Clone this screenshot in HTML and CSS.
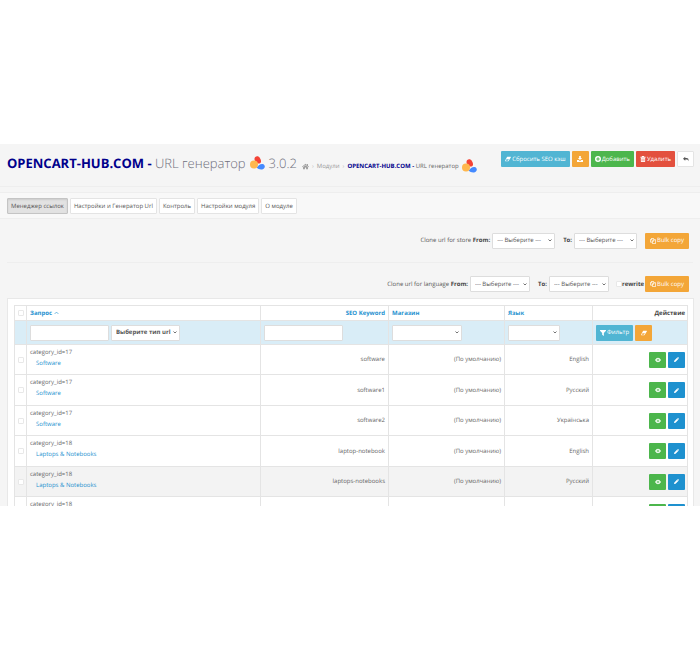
FILE: index.html
```html
<!DOCTYPE html>
<html lang="ru">
<head>
    <meta charset="UTF-8">
    <meta name="viewport" content="width=device-width, initial-scale=1.0">
    <title>URL генератор</title>
    <link rel="stylesheet" href="styles.css">
</head>
<body>
    <!-- Icon set -->
    <svg class="sprite" aria-hidden="true">
        <symbol id="logo" viewBox="0 0 15 14">
            <path fill="#f44336" d="M4.500 3C4.500 0 8.500 -.8 10 2.200C11.500 4.500 11.500 7 9.300 7.500C7 8 4.500 5.500 4.500 3Z"/>
            <path fill="#448aff" d="M6.500 11.500C8.500 9.500 10 7.800 12.500 8C15.500 8.500 15.600 12.300 12.800 13.200C10.500 13.800 8 13 6.500 11.500Z"/>
            <circle fill="#ffb74d" cx="4" cy="8.500" r="4"/>
        </symbol>
        <symbol id="home" viewBox="0 0 16 14">
            <path d="M8 .8L0 7.500L1 8.700L8 3L15 8.700L16 7.500L13.500 5.400V1.500H11.500V3.700Z"/>
            <path d="M8 4L2.500 8.500V13.500H6.500V9.500H9.500V13.500H13.500V8.500Z"/>
        </symbol>
        <symbol id="eraser" viewBox="0 0 16 12">
            <path fill-rule="evenodd" d="M6 0H15Q16.500 .5 15.500 2L9.500 11Q9 12 8 12H1Q-.5 11.500 .4 10L5 1Q5.400 0 6 0ZM4 6.500L1.800 10.500H7.500L10.500 6.500Z"/>
        </symbol>
        <symbol id="download" viewBox="0 0 14 14">
            <path d="M5 0H9V4.500H12L7 9.500L2 4.500H5ZM0 9.500H4L7 12L10 9.500H14V14H0Z"/>
        </symbol>
        <symbol id="plus" viewBox="0 0 14 14">
            <path fill-rule="evenodd" d="M7 0A7 7 0 1 0 7 14A7 7 0 1 0 7 0ZM5.800 3H8.200V5.800H11V8.200H8.200V11H5.800V8.200H3V5.800H5.800Z"/>
        </symbol>
        <symbol id="trash" viewBox="0 0 12 14">
            <path fill-rule="evenodd" d="M4 0H8L9 2H12V4H0V2H3ZM1 4.500H11V13Q11 14 10 14H2Q1 14 1 13ZM3 6V12H4V6ZM5.500 6V12H6.500V6ZM8 6V12H9V6Z"/>
        </symbol>
        <symbol id="reply" viewBox="0 0 16 14">
            <path d="M6 1V4H9C14 4 16 7 14 13C13 9.500 12 8.500 9 8.500H6V11.500L0 6.200Z"/>
        </symbol>
        <symbol id="copy" viewBox="0 0 16 16">
            <path fill="none" stroke="currentColor" stroke-width="2" d="M6 11H1V5L4.500 1H9.500V4M4.500 1V5H1M6.500 15V8L10 4.500H15V15ZM10 4.500V8.500H6.500"/>
        </symbol>
        <symbol id="filter" viewBox="0 0 14 14">
            <path d="M0 0H14V1.500L9 7V14L5 11V7L0 1.500Z"/>
        </symbol>
        <symbol id="eye" viewBox="0 0 16 12">
            <path fill-rule="evenodd" d="M0 6Q8 -6 16 6Q8 18 0 6ZM8 2.500A3.500 3.500 0 1 0 8 9.500A3.500 3.500 0 1 0 8 2.500Z"/>
            <circle cx="8" cy="6" r="2"/>
        </symbol>
        <symbol id="pencil" viewBox="0 0 14 14">
            <path d="M0 14L1 9.500L8.500 2L12 5.500L4.500 13ZM9 1.500L10.500 .4Q11.300 -.2 12 .5L13.500 2Q14.200 2.700 13.600 3.500L12.500 5Z"/>
        </symbol>
    </svg>

    <div class="container">
        <header class="page-header">
            <div class="heading">
                <h1><span><b>OPENCART-HUB.COM -</b> URL генератор</span> <svg class="logo"><use href="#logo"/></svg> 3.0.2</h1>
                <nav class="breadcrumb">
                    <a href="#" aria-label="Главная"><svg class="icon"><use href="#home"/></svg></a>
                    <span class="sep">›</span>
                    <a href="#">Модули</a>
                    <span class="sep">›</span>
                    <a href="#" class="current"><b>OPENCART-HUB.COM -</b> URL генератор</a>
                    <svg class="logo"><use href="#logo"/></svg>
                </nav>
            </div>
            <div class="actions">
                <button type="button" class="btn btn-info"><svg class="icon"><use href="#eraser"/></svg> Сбросить SEO кэш</button>
                <button type="button" class="btn btn-warning" aria-label="Скачать"><svg class="icon"><use href="#download"/></svg></button>
                <button type="button" class="btn btn-success"><svg class="icon"><use href="#plus"/></svg> Добавить</button>
                <button type="button" class="btn btn-danger"><svg class="icon"><use href="#trash"/></svg> Удалить</button>
                <button type="button" class="btn btn-default" aria-label="Назад"><svg class="icon"><use href="#reply"/></svg></button>
            </div>
        </header>

        <nav class="tabs">
            <button type="button" class="btn btn-default active">Менеджер ссылок</button>
            <button type="button" class="btn btn-default">Настройки и Генератор Url</button>
            <button type="button" class="btn btn-default">Контроль</button>
            <button type="button" class="btn btn-default">Настройки модуля</button>
            <button type="button" class="btn btn-default">О модуле</button>
        </nav>

        <form class="clone clone-store">
            <label for="storeFrom">Clone url for store <b>From:</b></label>
            <select id="storeFrom" class="form-control"><option>--- Выберите ---</option></select>
            <label for="storeTo" class="to"><b>To:</b></label>
            <select id="storeTo" class="form-control"><option>--- Выберите ---</option></select>
            <button type="button" class="btn btn-warning bulk"><svg class="icon"><use href="#copy"/></svg>Bulk copy</button>
        </form>

        <form class="clone clone-language">
            <label for="langFrom">Clone url for language <b>From:</b></label>
            <select id="langFrom" class="form-control"><option>--- Выберите ---</option></select>
            <label for="langTo" class="to"><b>To:</b></label>
            <select id="langTo" class="form-control"><option>--- Выберите ---</option></select>
            <label class="rewrite"><input type="checkbox"><b>rewrite</b></label>
            <button type="button" class="btn btn-warning"><svg class="icon"><use href="#copy"/></svg>Bulk copy</button>
        </form>

        <div class="panel">
            <table class="table">
                <colgroup>
                    <col class="col-check">
                    <col class="col-query">
                    <col class="col-keyword">
                    <col class="col-store">
                    <col class="col-lang">
                    <col class="col-action">
                </colgroup>
                <thead>
                    <tr>
                        <th><input type="checkbox" aria-label="Выбрать все"></th>
                        <th><a href="#">Запрос <svg class="caret" viewBox="0 0 8 5"><path d="M1 4L4 1L7 4"/></svg></a></th>
                        <th class="text-right"><a href="#">SEO Keyword</a></th>
                        <th><a href="#">Магазин</a></th>
                        <th><a href="#">Язык</a></th>
                        <th class="text-right">Действие</th>
                    </tr>
                    <tr class="filter">
                        <td></td>
                        <td>
                            <div class="fields">
                                <input type="text" class="form-control" aria-label="Запрос">
                                <select class="form-control type" aria-label="Тип url"><option>Выберите тип url</option></select>
                            </div>
                        </td>
                        <td><input type="text" class="form-control" aria-label="SEO Keyword"></td>
                        <td><select class="form-control store" aria-label="Магазин"><option></option></select></td>
                        <td><select class="form-control lang" aria-label="Язык"><option></option></select></td>
                        <td>
                            <div class="fields">
                                <button type="button" class="btn btn-info"><svg class="icon"><use href="#filter"/></svg> Фильтр</button>
                                <button type="button" class="btn btn-warning" aria-label="Очистить"><svg class="icon"><use href="#eraser"/></svg></button>
                            </div>
                        </td>
                    </tr>
                </thead>
                <tbody>
                    <tr>
                        <td><input type="checkbox" aria-label="Выбрать"></td>
                        <td class="query">category_id=17<a href="#">Software</a></td>
                        <td class="text-right">software</td>
                        <td class="text-right">(По умолчанию)</td>
                        <td class="text-right">English</td>
                        <td>
                            <div class="row-actions">
                                <button type="button" class="btn btn-success" aria-label="Просмотр"><svg class="icon"><use href="#eye"/></svg></button>
                                <button type="button" class="btn btn-primary" aria-label="Изменить"><svg class="icon"><use href="#pencil"/></svg></button>
                            </div>
                        </td>
                    </tr>
                    <tr>
                        <td><input type="checkbox" aria-label="Выбрать"></td>
                        <td class="query">category_id=17<a href="#">Software</a></td>
                        <td class="text-right">software1</td>
                        <td class="text-right">(По умолчанию)</td>
                        <td class="text-right">Русский</td>
                        <td>
                            <div class="row-actions">
                                <button type="button" class="btn btn-success" aria-label="Просмотр"><svg class="icon"><use href="#eye"/></svg></button>
                                <button type="button" class="btn btn-primary" aria-label="Изменить"><svg class="icon"><use href="#pencil"/></svg></button>
                            </div>
                        </td>
                    </tr>
                    <tr>
                        <td><input type="checkbox" aria-label="Выбрать"></td>
                        <td class="query">category_id=17<a href="#">Software</a></td>
                        <td class="text-right">software2</td>
                        <td class="text-right">(По умолчанию)</td>
                        <td class="text-right">Українська</td>
                        <td>
                            <div class="row-actions">
                                <button type="button" class="btn btn-success" aria-label="Просмотр"><svg class="icon"><use href="#eye"/></svg></button>
                                <button type="button" class="btn btn-primary" aria-label="Изменить"><svg class="icon"><use href="#pencil"/></svg></button>
                            </div>
                        </td>
                    </tr>
                    <tr>
                        <td><input type="checkbox" aria-label="Выбрать"></td>
                        <td class="query">category_id=18<a href="#">Laptops &amp; Notebooks</a></td>
                        <td class="text-right">laptop-notebook</td>
                        <td class="text-right">(По умолчанию)</td>
                        <td class="text-right">English</td>
                        <td>
                            <div class="row-actions">
                                <button type="button" class="btn btn-success" aria-label="Просмотр"><svg class="icon"><use href="#eye"/></svg></button>
                                <button type="button" class="btn btn-primary" aria-label="Изменить"><svg class="icon"><use href="#pencil"/></svg></button>
                            </div>
                        </td>
                    </tr>
                    <tr class="hover">
                        <td><input type="checkbox" aria-label="Выбрать"></td>
                        <td class="query">category_id=18<a href="#">Laptops &amp; Notebooks</a></td>
                        <td class="text-right">laptops-notebooks</td>
                        <td class="text-right">(По умолчанию)</td>
                        <td class="text-right">Русский</td>
                        <td>
                            <div class="row-actions">
                                <button type="button" class="btn btn-success" aria-label="Просмотр"><svg class="icon"><use href="#eye"/></svg></button>
                                <button type="button" class="btn btn-primary" aria-label="Изменить"><svg class="icon"><use href="#pencil"/></svg></button>
                            </div>
                        </td>
                    </tr>
                    <tr>
                        <td></td>
                        <td class="query">category_id=18</td>
                        <td></td>
                        <td></td>
                        <td></td>
                        <td>
                            <div class="row-actions">
                                <button type="button" class="btn btn-success" aria-label="Просмотр"><svg class="icon"><use href="#eye"/></svg></button>
                                <button type="button" class="btn btn-primary" aria-label="Изменить"><svg class="icon"><use href="#pencil"/></svg></button>
                            </div>
                        </td>
                    </tr>
                </tbody>
            </table>
        </div>
    </div>
</body>
</html>
```
FILE: styles.css
```css
* {
    box-sizing: border-box;
}

body {
    margin: 0;
    padding: 144px 0;
    background-color: #fff;
    color: #666;
    font-family: "Open Sans", sans-serif;
    font-size: 6px;
    line-height: 9px;
    text-rendering: geometricPrecision;
}

a {
    color: #1e91cf;
    text-decoration: none;
}

.sprite {
    display: none;
}

.container {
    height: calc(100vh - 288px);
    overflow: hidden;
    background-color: #f5f5f5;
}

.icon {
    width: 6px;
    height: 6px;
    fill: currentColor;
    flex: none;
}

.logo {
    width: 15px;
    height: 14px;
    flex: none;
}

/* Header */
.page-header {
    display: flex;
    justify-content: space-between;
    align-items: flex-start;
    height: 43px;
    padding: 7px 6px 0 7px;
    border-bottom: 1px solid #eee;
}

.heading,
.breadcrumb,
.actions {
    display: flex;
    align-items: center;
}

h1 {
    display: flex;
    align-items: center;
    gap: 4px;
    margin: 0;
    color: #6f6f7c;
    font-size: 13px;
    font-weight: 300;
    line-height: 24px;
    white-space: nowrap;
}

h1 b,
.current b {
    color: #00008b;
    font-weight: 700;
}

.breadcrumb {
    gap: 3px;
    padding: 6px 0 0 5px;
    white-space: nowrap;
}

.breadcrumb a {
    color: #999;
}

.breadcrumb .icon {
    display: block;
    width: 7px;
    height: 7px;
}

.breadcrumb .current {
    color: #666;
}

.sep {
    color: #bbb;
}

.actions {
    gap: 2px;
}

/* Buttons */
.btn {
    display: inline-flex;
    align-items: center;
    justify-content: center;
    gap: 1px;
    min-width: 17px;
    height: 16px;
    padding: 0 3px;
    border: 1px solid transparent;
    border-radius: 1px;
    color: #fff;
    font: inherit;
    text-rendering: inherit;
    white-space: nowrap;
    cursor: pointer;
}

.btn-info {
    background-color: #51b5d3;
}

.btn-warning {
    background-color: #f3a638;
}

.btn-success {
    background-color: #4cb64c;
}

.btn-danger {
    background-color: #e3503e;
}

.btn-primary {
    background-color: #1e91cf;
}

.btn-primary .icon {
    width: 5px;
    height: 5px;
}

.btn-default {
    background-color: #fff;
    border-color: #e4e4e4;
    color: #555;
}

.btn-default.active {
    background-color: #e2e2e2;
    border-color: #c4c4c4;
    box-shadow: inset 0 1px 2px rgba(0, 0, 0, 0.1);
}

/* Tabs */
.tabs {
    display: flex;
    gap: 2px;
    margin-top: 5px;
    padding: 5px 7px 4px;
    background-color: #f8f8f8;
    border-top: 1px solid #eee;
    border-bottom: 1px solid #eee;
}

/* Clone forms */
.clone {
    display: flex;
    align-items: center;
    justify-content: flex-end;
    margin: 0 7px;
    padding-right: 4px;
    color: #555;
}

.clone b {
    color: #444;
}

.clone-store {
    height: 44px;
    border-bottom: 1px solid #eee;
}

.clone-language {
    height: 35px;
    padding-top: 7px;
}

.clone .form-control {
    width: 60px;
    margin-left: 2px;
}

.clone-store .form-control {
    width: 63px;
}

.clone .btn {
    padding: 0 4px;
}

.to {
    margin-left: 8px;
}

.bulk {
    margin-left: 8px;
}

.rewrite {
    display: flex;
    align-items: center;
    margin: 0 1px 0 7px;
}

.form-control {
    width: 79px;
    height: 16px;
    padding: 0 4px;
    border: 1px solid #ddd;
    border-radius: 1px;
    background-color: #fff;
    color: #555;
    font: inherit;
    text-rendering: inherit;
}

select.form-control {
    appearance: none;
    background-image: url("data:image/svg+xml,%3Csvg xmlns='http://www.w3.org/2000/svg' viewBox='0 0 8 6'%3E%3Cpath d='M1 1l3 3 3-3' fill='none' stroke='%23444' stroke-width='1.500'/%3E%3C/svg%3E");
    background-repeat: no-repeat;
    background-position: right 2px center;
    background-size: 4px 3px;
}

input[type="checkbox"] {
    appearance: none;
    display: block;
    width: 6px;
    height: 6px;
    margin: 0 auto;
    border: 1px solid #e8e8e8;
    border-radius: 1px;
    background-color: #fff;
}

/* Table */
.panel {
    margin: 0 6px 0 7px;
    padding: 6px 5px 6px 6px;
    background-color: #fff;
    border: 1px solid #e8e8e8;
}

.table {
    width: 100%;
    table-layout: fixed;
    border-collapse: collapse;
}

.col-check {
    width: 12px;
}

.col-keyword {
    width: 128px;
}

.col-store {
    width: 116px;
}

.col-lang {
    width: 88px;
}

.col-action {
    width: 95px;
}

.table th,
.table td {
    height: 30px;
    padding: 0 3px;
    border: 1px solid #e4e4e4;
    text-align: left;
    vertical-align: middle;
}

.table th {
    height: 15px;
    color: #444;
}

.table tbody tr:nth-child(even) td {
    height: 31px;
}

.table .filter td {
    height: 24px;
    background-color: #d9edf7;
}

.table .text-right {
    text-align: right;
}

.table td:first-child,
.table th:first-child {
    padding: 0;
}

.table td:last-child,
.table th:last-child {
    padding-right: 2px;
}

.table .query {
    padding-top: 3px;
    vertical-align: top;
}

.query a {
    display: block;
    padding: 2px 0 0 6px;
}

.hover {
    background-color: #f3f3f3;
}

.caret {
    width: 5px;
    height: 4px;
    fill: none;
    stroke: currentColor;
    stroke-width: 1;
}

.fields,
.row-actions {
    display: flex;
    gap: 2px;
}

.row-actions {
    justify-content: flex-end;
}

.type {
    width: 69px;
    font-weight: 700;
}

.store {
    width: 70px;
}

.lang {
    width: 52px;
}

.filter .form-control,
.filter .btn {
    vertical-align: middle;
}
```
